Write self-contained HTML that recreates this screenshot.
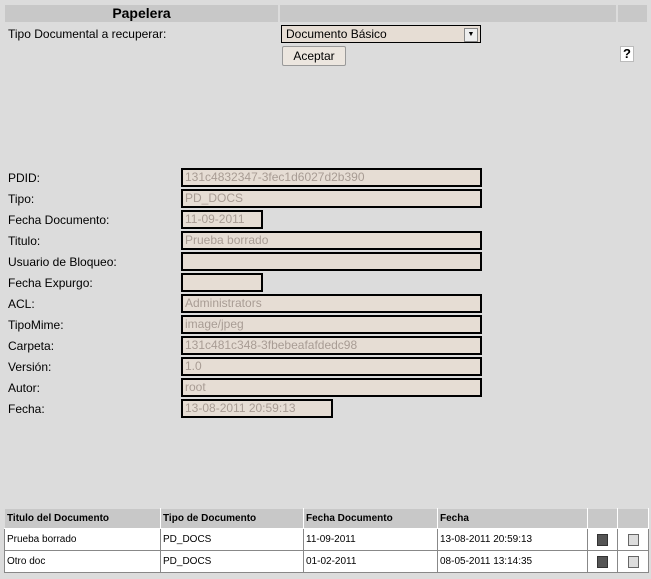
<!DOCTYPE html>
<html><head><meta charset="utf-8"><style>
body{margin:0;width:651px;height:579px;background:#dcdcdc;font-family:"Liberation Sans",sans-serif;font-size:12px;position:relative;overflow:hidden}
.a{position:absolute}
.h{background:#c8c8c8;height:17px;top:5px}
.lbl{position:absolute;left:8px;font-size:12px;color:#000}
.in{position:absolute;left:181px;width:295px;height:15px;border:2px solid #000;background:#e6ddd4;color:#a89c94;font-size:12px;line-height:15px;padding-left:2px;box-sizing:content-box}
table{position:absolute;left:4px;top:508px;border-collapse:collapse;font-size:10px}
td{border:1px solid #888;height:21px;padding:0 2px;background:#fff}
tr.hd td{background:#c8c8c8;font-weight:bold;height:19px;border-color:#dcdcdc #fff #fff #dcdcdc}
.ic{display:inline-block;width:9px;height:10px;background:#555;border:1px solid #333;vertical-align:middle}
.ic2{display:inline-block;width:9px;height:10px;background:#ddd;border:1px solid #666;vertical-align:middle}
</style></head><body>
<div class="a h" style="left:5px;width:273px;text-align:center;font-weight:bold;font-size:14px;line-height:17px">Papelera</div>
<div class="a h" style="left:280px;width:336px"></div>
<div class="a h" style="left:618px;width:29px"></div>
<div class="lbl" style="top:27px">Tipo Documental a recuperar:</div>
<div class="a" style="left:281px;top:25px;border:1px solid #000;background:#e6ddd4;font-size:12px;line-height:16px;padding-left:4px;box-sizing:border-box;width:200px;height:18px">Documento Básico
<div class="a" style="right:2px;top:2px;width:12px;height:12px;background:#eee;border:1px solid #888;font-size:7px;line-height:12px;text-align:center">▼</div></div>
<div class="a" style="left:282px;top:46px;width:62px;height:18px;border:1px solid #999;border-radius:2px;background:#ece6df;text-align:center;line-height:18px;font-size:12px">Aceptar</div>
<div class="a" style="left:620px;top:46px;width:12px;height:14px;background:#fff;border:1px solid #bbb;font-weight:bold;font-size:13px;line-height:14px;text-align:center">?</div>

<div class="lbl" style="top:171px">PDID:</div><div class="in" style="top:168px">131c4832347-3fec1d6027d2b390</div>
<div class="lbl" style="top:192px">Tipo:</div><div class="in" style="top:189px">PD_DOCS</div>
<div class="lbl" style="top:213px">Fecha Documento:</div><div class="in" style="top:210px;width:76px">11-09-2011</div>
<div class="lbl" style="top:234px">Titulo:</div><div class="in" style="top:231px">Prueba borrado</div>
<div class="lbl" style="top:255px">Usuario de Bloqueo:</div><div class="in" style="top:252px"></div>
<div class="lbl" style="top:276px">Fecha Expurgo:</div><div class="in" style="top:273px;width:76px"></div>
<div class="lbl" style="top:297px">ACL:</div><div class="in" style="top:294px">Administrators</div>
<div class="lbl" style="top:318px">TipoMime:</div><div class="in" style="top:315px">image/jpeg</div>
<div class="lbl" style="top:339px">Carpeta:</div><div class="in" style="top:336px">131c481c348-3fbebeafafdedc98</div>
<div class="lbl" style="top:360px">Versión:</div><div class="in" style="top:357px">1.0</div>
<div class="lbl" style="top:381px">Autor:</div><div class="in" style="top:378px">root</div>
<div class="lbl" style="top:402px">Fecha:</div><div class="in" style="top:399px;width:146px">13-08-2011 20:59:13</div>

<table>
<tr class="hd"><td style="width:151px">Titulo del Documento</td><td style="width:138px">Tipo de Documento</td><td style="width:129px">Fecha Documento</td><td style="width:145px">Fecha</td><td style="width:25px"></td><td style="width:26px"></td></tr>
<tr><td>Prueba borrado</td><td>PD_DOCS</td><td>11-09-2011</td><td>13-08-2011 20:59:13</td><td style="text-align:center"><span class="ic"></span></td><td style="text-align:center"><span class="ic2"></span></td></tr>
<tr><td>Otro doc</td><td>PD_DOCS</td><td>01-02-2011</td><td>08-05-2011 13:14:35</td><td style="text-align:center"><span class="ic"></span></td><td style="text-align:center"><span class="ic2"></span></td></tr>
</table>
</body></html>
